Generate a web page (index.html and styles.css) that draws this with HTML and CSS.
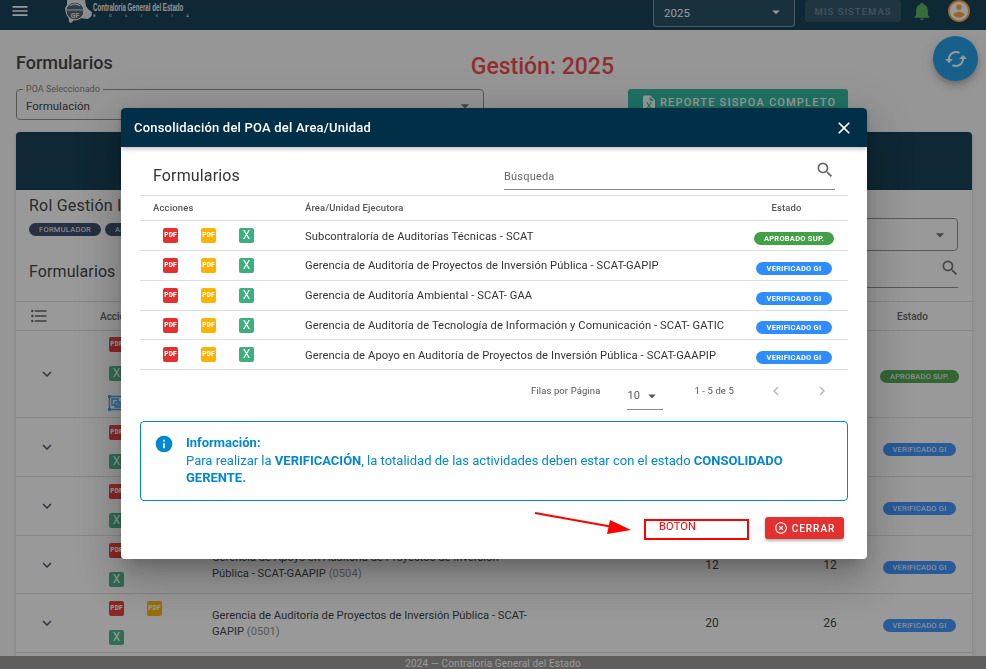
FILE: index.html
```html
<!DOCTYPE html>
<html lang="es">
<head>
<meta charset="utf-8">
<title>Formularios</title>
<link rel="stylesheet" href="styles.css">
</head>
<body>
<svg class="sprite" aria-hidden="true">
  <symbol id="i-menu" viewBox="0 0 24 24"><path d="M3,6H21V8H3V6M3,11H21V13H3V11M3,16H21V18H3V16Z"/></symbol>
  <symbol id="i-drop" viewBox="0 0 24 24"><path d="M7,10L12,15L17,10H7Z"/></symbol>
  <symbol id="i-bell" viewBox="0 0 24 24"><path d="M21,19V20H3V19L5,17V11C5,7.9 7.03,5.17 10,4.29C10,4.19 10,4.1 10,4A2,2 0 0,1 12,2A2,2 0 0,1 14,4C14,4.1 14,4.19 14,4.29C16.97,5.17 19,7.9 19,11V17L21,19M14,21A2,2 0 0,1 12,23A2,2 0 0,1 10,21"/></symbol>
  <symbol id="i-search" viewBox="0 0 24 24"><path d="M9.5,3A6.5,6.5 0 0,1 16,9.5C16,11.11 15.41,12.59 14.44,13.73L14.71,14H15.5L20.5,19L19,20.5L14,15.5V14.71L13.73,14.44C12.59,15.41 11.11,16 9.5,16A6.5,6.5 0 0,1 3,9.5A6.5,6.5 0 0,1 9.5,3M9.5,5C7,5 5,7 5,9.5C5,12 7,14 9.5,14C12,14 14,12 14,9.5C14,7 12,5 9.5,5Z"/></symbol>
  <symbol id="i-close" viewBox="0 0 24 24"><path d="M19,6.41L17.59,5L12,10.59L6.41,5L5,6.41L10.59,12L5,17.59L6.41,19L12,13.41L17.59,19L19,17.59L13.41,12L19,6.41Z"/></symbol>
  <symbol id="i-info" viewBox="0 0 24 24"><path d="M13,9H11V7H13M13,17H11V11H13M12,2A10,10 0 0,0 2,12A10,10 0 0,0 12,22A10,10 0 0,0 22,12A10,10 0 0,0 12,2Z"/></symbol>
  <symbol id="i-close-circle" viewBox="0 0 24 24"><path d="M12,20C7.59,20 4,16.41 4,12C4,7.59 7.59,4 12,4C16.41,4 20,7.59 20,12C20,16.41 16.41,20 12,20M12,2C6.47,2 2,6.47 2,12C2,17.53 6.47,22 12,22C17.53,22 22,17.53 22,12C22,6.47 17.53,2 12,2M14.59,8L12,10.59L9.41,8L8,9.41L10.59,12L8,14.59L9.41,16L12,13.41L14.59,16L16,14.59L13.41,12L16,9.41L14.59,8Z"/></symbol>
  <symbol id="i-chev-down" viewBox="0 0 24 24"><path d="M7.41,8.58L12,13.17L16.59,8.58L18,10L12,16L6,10L7.41,8.58Z"/></symbol>
  <symbol id="i-chev-left" viewBox="0 0 24 24"><path d="M15.41,16.58L10.83,12L15.41,7.41L14,6L8,12L14,18L15.41,16.58Z"/></symbol>
  <symbol id="i-chev-right" viewBox="0 0 24 24"><path d="M8.59,16.58L13.17,12L8.59,7.41L10,6L16,12L10,18L8.59,16.58Z"/></symbol>
  <symbol id="i-list" viewBox="0 0 24 24"><path d="M7,5H21V7H7V5M7,13V11H21V13H7M4,4.5A1.5,1.5 0 0,1 5.5,6A1.5,1.5 0 0,1 4,7.5A1.5,1.5 0 0,1 2.5,6A1.5,1.5 0 0,1 4,4.5M4,10.5A1.5,1.5 0 0,1 5.5,12A1.5,1.5 0 0,1 4,13.5A1.5,1.5 0 0,1 2.5,12A1.5,1.5 0 0,1 4,10.5M7,19V17H21V19H7M4,16.5A1.5,1.5 0 0,1 5.5,18A1.5,1.5 0 0,1 4,19.5A1.5,1.5 0 0,1 2.5,18A1.5,1.5 0 0,1 4,16.5Z"/></symbol>
  <symbol id="i-file-excel" viewBox="0 0 24 24"><path d="M14,2H6A2,2 0 0,0 4,4V20A2,2 0 0,0 6,22H18A2,2 0 0,0 20,20V8L14,2M15.8,20H14L12,16.6L10,20H8.2L11.1,15.5L8.2,11H10L12,14.4L14,11H15.8L12.9,15.5L15.8,20M13,9V3.5L18.5,9H13Z"/></symbol>
  <symbol id="i-account" viewBox="0 0 24 24"><path d="M12,19.2C9.5,19.2 7.29,17.92 6,16C6.03,14 10,12.9 12,12.9C14,12.9 17.97,14 18,16C16.71,17.92 14.5,19.2 12,19.2M12,5A3,3 0 0,1 15,8A3,3 0 0,1 12,11A3,3 0 0,1 9,8A3,3 0 0,1 12,5M12,2A10,10 0 0,0 2,12A10,10 0 0,0 12,22A10,10 0 0,0 22,12A10,10 0 0,0 12,2Z"/></symbol>
  <symbol id="i-sync" viewBox="0 0 24 24"><path d="M19,8L15,12H18A6,6 0 0,1 12,18C11,18 10.03,17.75 9.2,17.3L7.74,18.76C8.97,19.54 10.43,20 12,20A8,8 0 0,0 20,12H23M6,12A6,6 0 0,1 12,6C13,6 13.97,6.25 14.8,6.7L16.26,5.24C15.03,4.46 13.57,4 12,4A8,8 0 0,0 4,12H1L5,16L9,12"/></symbol>
</svg>

<div class="app">
  <header class="appbar">
    <svg class="ic appbar-menu"><use href="#i-menu"/></svg>
    <div class="brand">
      <svg class="brand-logo" viewBox="0 0 28 24">
        <path class="logo-map" d="M3 0H21L22 6L24 9L28 12L27.500 16L24 19L15 18L11 19L7 23L5 22L4.500 17L2 12L1 8L3 5Z"/>
        <circle class="logo-disc" cx="11" cy="11" r="9"/>
        <path class="logo-line" d="M3 10H19M6 5.500C9 3.500 14 3.500 16 6"/>
        <text class="logo-text" x="11" y="18">GF</text>
      </svg>
      <div class="brand-text">
        <span class="brand-name">Contraloría General del Estado</span>
        <span class="brand-sub">BOLIVIA</span>
      </div>
    </div>
    <div class="year-select">
      <span>2025</span>
      <svg class="ic year-drop"><use href="#i-drop"/></svg>
    </div>
    <span class="systems-btn">MIS SISTEMAS</span>
    <svg class="ic bell"><use href="#i-bell"/></svg>
    <span class="avatar"><svg class="ic"><use href="#i-account"/></svg></span>
  </header>

  <main class="main">
    <div class="title-row">
      <h1 class="page-title">Formularios</h1>
      <div class="gestion">Gestión: 2025</div>
    </div>
    <div class="filter-row">
      <div class="poa-select">
        <span class="poa-label">POA Seleccionado</span>
        <span class="poa-value">Formulación</span>
        <svg class="ic poa-drop"><use href="#i-drop"/></svg>
      </div>
      <div class="report-btn">
        <svg class="ic"><use href="#i-file-excel"/></svg>
        <span>REPORTE SISPOA COMPLETO</span>
      </div>
    </div>

    <section class="card">
      <div class="card-head"></div>
      <div class="card-top">
        <div class="role">
          <div class="role-title">Rol Gestión Institucional</div>
          <div class="role-chips">
            <span class="role-chip">FORMULADOR</span>
            <span class="role-chip">APROBADOR</span>
          </div>
        </div>
        <div class="unit-select"><svg class="ic"><use href="#i-drop"/></svg></div>
      </div>
      <div class="search-row">
        <div class="search-title">Formularios</div>
        <div class="bg-search"><svg class="ic"><use href="#i-search"/></svg></div>
      </div>
      <div class="bt-row bt-head">
        <span class="bt-toggle"><svg class="ic bt-list"><use href="#i-list"/></svg></span>
        <span>Acciones</span>
        <span>Área/Unidad Ejecutora</span>
        <span></span><span></span>
        <span class="bt-state">Estado</span>
      </div>

      <div class="bt-row bt-tall">
        <span class="bt-toggle"><svg class="ic bt-chev"><use href="#i-chev-down"/></svg></span>
        <div class="bt-icons">
          <span class="doc doc-pdf">PDF</span><span class="doc doc-yellow">PDF</span>
          <span class="doc doc-x">X</span><span></span>
          <svg class="doc-combine" viewBox="0 0 16 16"><path d="M1.500 1.500H14.500V14.500H1.500ZM4 4H10V10H4ZM7 7H12V12H7Z"/><path class="doc-combine-dots" d="M0 0H3V3H0ZM13 0H16V3H13ZM0 13H3V16H0ZM13 13H16V16H13Z"/></svg>
        </div>
        <div class="bt-name">Subcontraloría de Auditorías Técnicas - SCAT <span class="code">(0500)</span></div>
        <span class="bt-num">14</span><span class="bt-num bt-num-2">14</span>
        <span class="bt-state"><span class="pill pill-green">APROBADO SUP.</span></span>
      </div>
      <div class="bt-row">
        <span class="bt-toggle"><svg class="ic bt-chev"><use href="#i-chev-down"/></svg></span>
        <div class="bt-icons">
          <span class="doc doc-pdf">PDF</span><span class="doc doc-yellow">PDF</span>
          <span class="doc doc-x">X</span>
        </div>
        <div class="bt-name">Gerencia de Auditoría Ambiental - SCAT- GAA <span class="code">(0502)</span></div>
        <span class="bt-num">16</span><span class="bt-num bt-num-2">16</span>
        <span class="bt-state"><span class="pill pill-blue">VERIFICADO GI</span></span>
      </div>
      <div class="bt-row">
        <span class="bt-toggle"><svg class="ic bt-chev"><use href="#i-chev-down"/></svg></span>
        <div class="bt-icons">
          <span class="doc doc-pdf">PDF</span><span class="doc doc-yellow">PDF</span>
          <span class="doc doc-x">X</span>
        </div>
        <div class="bt-name">Gerencia de Auditoría de Tecnología de Información y Comunicación - SCAT- GATIC <span class="code">(0503)</span></div>
        <span class="bt-num">18</span><span class="bt-num bt-num-2">18</span>
        <span class="bt-state"><span class="pill pill-blue">VERIFICADO GI</span></span>
      </div>
      <div class="bt-row bt-short">
        <span class="bt-toggle"><svg class="ic bt-chev"><use href="#i-chev-down"/></svg></span>
        <div class="bt-icons">
          <span class="doc doc-pdf">PDF</span><span class="doc doc-yellow">PDF</span>
          <span class="doc doc-x">X</span>
        </div>
        <div class="bt-name">Gerencia de Apoyo en Auditoría de Proyectos de Inversión Pública - SCAT-GAAPIP <span class="code">(0504)</span></div>
        <span class="bt-num">12</span><span class="bt-num bt-num-2">12</span>
        <span class="bt-state"><span class="pill pill-blue">VERIFICADO GI</span></span>
      </div>
      <div class="bt-row">
        <span class="bt-toggle"><svg class="ic bt-chev"><use href="#i-chev-down"/></svg></span>
        <div class="bt-icons">
          <span class="doc doc-pdf">PDF</span><span class="doc doc-yellow">PDF</span>
          <span class="doc doc-x">X</span>
        </div>
        <div class="bt-name">Gerencia de Auditoría de Proyectos de Inversión Pública - SCAT-GAPIP <span class="code">(0501)</span></div>
        <span class="bt-num">20</span><span class="bt-num bt-num-2">26</span>
        <span class="bt-state"><span class="pill pill-blue">VERIFICADO GI</span></span>
      </div>
      <div class="bt-row"></div>
    </section>
  </main>

  <footer class="footer">2024 — Contraloría General del Estado</footer>
</div>

<button class="fab" type="button" aria-label="Actualizar"><svg class="ic"><use href="#i-sync"/></svg></button>
<div class="overlay"></div>

<div class="dialog" role="dialog">
  <div class="dlg-head">
    <span>Consolidación del POA del Area/Unidad</span>
    <svg class="ic dlg-close"><use href="#i-close"/></svg>
  </div>
  <div class="dlg-body">
    <div class="dlg-search-row">
      <div class="dlg-title">Formularios</div>
      <div class="dlg-search">
        <span>Búsqueda</span>
        <svg class="ic"><use href="#i-search"/></svg>
      </div>
    </div>

    <div class="mt">
      <div class="mt-row mt-head">
        <span class="mt-actions-head">Acciones</span>
        <span>Área/Unidad Ejecutora</span>
        <span class="mt-state-head">Estado</span>
      </div>
      <div class="mt-row mt-row-1">
        <div class="mt-icons"><span class="doc doc-pdf">PDF</span><span class="doc doc-yellow">PDF</span><span class="doc doc-x">X</span></div>
        <span class="mt-name">Subcontraloría de Auditorías Técnicas - SCAT</span>
        <span class="mt-state"><span class="pill pill-green">APROBADO SUP.</span></span>
      </div>
      <div class="mt-row">
        <div class="mt-icons"><span class="doc doc-pdf">PDF</span><span class="doc doc-yellow">PDF</span><span class="doc doc-x">X</span></div>
        <span class="mt-name">Gerencia de Auditoría de Proyectos de Inversión Pública - SCAT-GAPIP</span>
        <span class="mt-state"><span class="pill pill-blue">VERIFICADO GI</span></span>
      </div>
      <div class="mt-row">
        <div class="mt-icons"><span class="doc doc-pdf">PDF</span><span class="doc doc-yellow">PDF</span><span class="doc doc-x">X</span></div>
        <span class="mt-name">Gerencia de Auditoría Ambiental - SCAT- GAA</span>
        <span class="mt-state"><span class="pill pill-blue">VERIFICADO GI</span></span>
      </div>
      <div class="mt-row mt-row-short">
        <div class="mt-icons"><span class="doc doc-pdf">PDF</span><span class="doc doc-yellow">PDF</span><span class="doc doc-x">X</span></div>
        <span class="mt-name">Gerencia de Auditoría de Tecnología de Información y Comunicación - SCAT- GATIC</span>
        <span class="mt-state"><span class="pill pill-blue">VERIFICADO GI</span></span>
      </div>
      <div class="mt-row mt-row-last">
        <div class="mt-icons"><span class="doc doc-pdf">PDF</span><span class="doc doc-yellow">PDF</span><span class="doc doc-x">X</span></div>
        <span class="mt-name">Gerencia de Apoyo en Auditoría de Proyectos de Inversión Pública - SCAT-GAAPIP</span>
        <span class="mt-state"><span class="pill pill-blue">VERIFICADO GI</span></span>
      </div>
    </div>

    <div class="pager">
      <span class="pager-label">Filas por Página</span>
      <div class="pager-select"><span>10</span><svg class="ic"><use href="#i-drop"/></svg></div>
      <span class="pager-range">1 - 5 de 5</span>
      <svg class="ic pager-nav"><use href="#i-chev-left"/></svg>
      <svg class="ic pager-nav"><use href="#i-chev-right"/></svg>
    </div>

    <div class="notice">
      <svg class="ic notice-icon"><use href="#i-info"/></svg>
      <div class="notice-text">
        <strong>Información:</strong><br>
        Para realizar la <strong>VERIFICACIÓN</strong>, la totalidad de las actividades deben estar con el estado <strong>CONSOLIDADO GERENTE.</strong>
      </div>
    </div>

    <div class="dlg-actions">
      <span class="close-btn"><svg class="ic"><use href="#i-close-circle"/></svg>CERRAR</span>
    </div>
  </div>

  <svg class="mark-arrow" viewBox="0 0 100 24"><path class="mark-line" d="M0 1L78 15"/><path class="mark-head" d="M96 18L75 8L72 22Z"/></svg>
  <div class="mark-box">BOTON</div>
</div>
</body>
</html>
```
FILE: styles.css
```css
* { box-sizing: border-box; }
html, body { margin: 0; height: 100%; overflow: hidden; }
body { font-family: Roboto, "Liberation Sans", sans-serif; color: #333; background: #fafafa; }
.sprite { display: none; }
.ic { display: block; width: 24px; height: 24px; fill: currentColor; flex: none; }

.app { height: 669px; display: flex; flex-direction: column; background: #fafafa; }

/* App bar */
.appbar { height: 30px; flex: none; display: flex; align-items: flex-start; background: #012f47; color: #fff; }
.appbar-menu { width: 20px; height: 20px; margin: 1px 0 0 9.5px; }
.brand { display: flex; flex: none; margin-left: 34.5px; }
.brand-logo { width: 28px; height: 24px; flex: none; }
.logo-map { fill: #e6e8e8; }
.logo-disc { fill: #3f5a68; stroke: #fff; stroke-width: 1; }
.logo-line { fill: none; stroke: #e6e8e8; stroke-width: 1.2; }
.logo-text { fill: #e6e8e8; font-size: 7px; font-weight: 700; text-anchor: middle; }
.brand-text { width: 92px; margin-left: 1px; display: flex; flex-direction: column; color: #f2f2f2; }
.brand-name { margin-top: 1px; font: 700 11px/12px "Liberation Sans", sans-serif; white-space: nowrap; transform: scaleX(.56); transform-origin: left; }
.brand-sub { font-size: 4px; line-height: 5px; letter-spacing: 13.5px; white-space: nowrap; }
.year-select { flex: none; width: 142px; height: 32px; margin: -5px 0 0 468px; padding: 0 10px; display: flex; align-items: center; justify-content: space-between; background: rgba(255,255,255,.08); border: 1px solid rgba(255,255,255,.4); border-radius: 4px; font-size: 11.5px; color: #fff; }
.year-select span { margin-top: 4px; }
.year-drop { width: 18px; height: 18px; margin: 2px -1px 0 0; }
.systems-btn { flex: none; width: 96px; height: 22px; margin-left: 10px; display: flex; align-items: center; justify-content: center; background: rgba(255,255,255,.12); border-radius: 3px; color: rgba(255,255,255,.3); font-size: 9.5px; font-weight: 500; letter-spacing: 1px; white-space: nowrap; }
.bell { width: 20px; height: 20px; margin: 1px 0 0 10.5px; color: #4caf50; }
.avatar { flex: none; width: 22px; height: 22px; margin-left: 16.5px; border-radius: 50%; background: #ff9f38; display: flex; align-items: center; justify-content: center; color: #fff; }
.avatar .ic { width: 22px; height: 22px; color: #fff; }

/* Main */
.main { flex: 1; min-height: 0; overflow: hidden; padding: 19px 14px 0 16px; }
.title-row { display: flex; height: 40px; }
.page-title { margin: 0; font-size: 18px; line-height: 28px; font-weight: 500; color: #333; }
.gestion { margin: 2px 0 0 358px; font-size: 23px; line-height: 32px; font-weight: 500; color: #f03a3a; }
.filter-row { display: flex; margin-bottom: 9px; }
.poa-select { position: relative; width: 468px; height: 31px; border: 1px solid #888; border-radius: 4px; display: flex; align-items: center; padding: 3px 9px 0; font-size: 11.5px; }
.poa-label { position: absolute; left: 6px; top: -5px; padding: 0 3px; font-size: 9px; line-height: 9px; color: #777; background: #fafafa; }
.poa-drop { position: absolute; right: 8px; top: 6px; width: 20px; height: 20px; color: #666; }
.report-btn { flex: none; width: 220px; height: 34px; margin-left: 144px; display: flex; align-items: flex-start; padding: 5px 0 0 12px; background: #1fb89b; border-radius: 3px; color: #fff; font-size: 11px; font-weight: 500; letter-spacing: 1.2px; white-space: nowrap; }
.report-btn .ic { width: 18px; height: 18px; margin-right: 2px; }
.report-btn span { line-height: 18px; }

/* Background card */
.card { width: 956px; height: 540px; background: #fff; border-radius: 4px 4px 0 0; box-shadow: 0 2px 4px rgba(0,0,0,.2); }
.card-head { height: 58px; background: #012f47; border-radius: 4px 4px 0 0; }
.card-top { display: flex; justify-content: space-between; padding: 6px 14px 0 13px; height: 62px; }
.role-title { font-size: 16px; line-height: 20px; letter-spacing: .2px; color: #333; }
.role-chips { display: flex; gap: 4px; margin-top: 7px; }
.role-chip { height: 13px; padding: 0 10px; border-radius: 7px; background: #2d4060; color: #fff; font-size: 7.5px; line-height: 13px; letter-spacing: .3px; }
.unit-select { width: 300px; height: 33px; margin-top: 22px; border: 1px solid #888; border-radius: 4px; display: flex; justify-content: flex-end; align-items: center; padding-right: 7px; color: #666; }
.unit-select .ic { width: 20px; height: 20px; }
.search-row { display: flex; justify-content: space-between; padding: 0 14px 0 13px; height: 49px; }
.search-title { font-size: 16px; line-height: 20px; margin-top: 10px; letter-spacing: .1px; color: #333; }
.bg-search { width: 300px; height: 36px; border-bottom: 1px solid #888; display: flex; justify-content: flex-end; color: #666; }
.bg-search .ic { width: 20px; height: 20px; margin: 6px -2px 0 0; }

.bt-row { display: grid; grid-template-columns: 84px 112px 441px 118px 99px 1fr; align-items: center; height: 59px; border-top: 1px solid #ddd; font-size: 11.2px; color: #333; }
.bt-tall { height: 87px; }
.bt-short { height: 58px; }
.bt-head { height: 29px; font-size: 10px; font-weight: 500; color: #555; }
.bt-toggle { display: flex; justify-content: center; padding-right: 22px; color: #2d4a63; }
.bt-head .bt-toggle { padding-right: 38px; }
.bt-list { width: 20px; height: 20px; color: #555; }
.bt-chev { width: 18px; height: 18px; }
.bt-state { text-align: center; padding-right: 3px; }
.bt-head .bt-state { padding-right: 17px; }
.bt-state .pill { margin-top: 5px; font-weight: 400; }
.bt-state .pill-blue { width: 73px; }
.bt-state .pill-green { width: 79px; }
.bt-num { text-align: center; font-size: 12px; }
.bt-num-2 { padding-left: 19px; }
.bt-icons { display: grid; grid-template-columns: 16px 16px; column-gap: 22px; row-gap: 14px; margin-left: 9px; }
.bt-name { width: 320px; margin-top: 2px; line-height: 16px; }
.code { color: #888; }

/* Shared */
.doc { display: block; width: 15px; height: 15px; border-radius: 2px; color: #fff; text-align: center; font-size: 6.5px; line-height: 15px; font-weight: 900; letter-spacing: .1px; }
.doc-pdf { background: #e53030; }
.doc-yellow { background: #ffb300; }
.doc-x { background: #3daf7e; font-size: 12px; font-weight: 400; letter-spacing: 0; }
.doc-combine { width: 16px; height: 16px; margin-left: -1px; fill: none; stroke: #2a9df4; stroke-width: 1.4; }
.doc-combine-dots { fill: #2a9df4; stroke: none; }
.pill { display: inline-block; height: 13px; border-radius: 7px; color: #fff; font-size: 7.5px; line-height: 13px; font-weight: 700; letter-spacing: .25px; text-align: center; vertical-align: top; }
.pill-green { width: 80px; background: #43a047; }
.pill-blue { width: 76px; background: #2f8dff; }

/* FAB and overlay */
.fab { position: fixed; left: 933px; top: 36px; width: 45px; height: 45px; padding: 0; border: 0; border-radius: 50%; background: #0f96e8; color: #fff; display: flex; align-items: center; justify-content: center; box-shadow: 0 3px 5px -1px rgba(0,0,0,.2), 0 6px 10px 0 rgba(0,0,0,.14), 0 1px 18px 0 rgba(0,0,0,.12); }
.overlay { position: fixed; inset: 0; background: rgba(33,33,33,.46); }

/* Dialog */
.dialog { position: fixed; left: 121px; top: 108px; width: 746px; height: 451px; background: #fff; border-radius: 4px; box-shadow: 0 11px 15px -7px rgba(0,0,0,.2), 0 24px 38px 3px rgba(0,0,0,.14), 0 9px 46px 8px rgba(0,0,0,.12); }
.dlg-head { position: relative; height: 39px; padding: 0 13px; display: flex; align-items: center; justify-content: space-between; background: #012f47; color: #fff; border-radius: 4px 4px 0 0; font-size: 13px; font-weight: 500; letter-spacing: .2px; box-shadow: 0 2px 4px rgba(0,0,0,.25); }
.dlg-close { width: 20px; height: 20px; }
.dlg-body { padding: 0 19px; }
.dlg-search-row { height: 48px; display: flex; }
.dlg-title { width: 364px; padding: 19px 0 0 13px; font-size: 16px; line-height: 20px; letter-spacing: .15px; color: #333; }
.dlg-search { width: 331px; height: 43px; border-bottom: 1px solid #888; display: flex; justify-content: space-between; font-size: 11px; color: #666; }
.dlg-search span { margin-top: 23px; line-height: 14px; letter-spacing: .2px; }
.dlg-search .ic { width: 20px; height: 20px; margin: 13px 0 0 0; color: #666; }

.mt { border-bottom: 1px solid #ddd; }
.mt-row { display: grid; grid-template-columns: 165px minmax(0, 1fr) 128px; align-items: center; height: 30px; border-top: 1px solid #ddd; font-size: 11.2px; color: #333; letter-spacing: .1px; }
.mt-row-short { height: 29px; }
.mt-name { margin-top: -1px; white-space: nowrap; }
.mt-row-1 .mt-name { margin-top: 1px; }
.mt-row-short .mt-name { margin-top: 0; }
.mt-row-last .mt-name { margin-top: 1px; }
.mt-head { height: 25px; padding-bottom: 2px; font-size: 9.5px; font-weight: 500; color: #555; letter-spacing: .15px; }
.mt-actions-head { padding-left: 13px; }
.mt-state-head { text-align: center; padding-left: 5px; }
.mt-state { text-align: center; padding-left: 20px; white-space: nowrap; }
.mt-row .pill { margin-top: 5px; }
.mt-icons { display: flex; gap: 23px; padding-left: 23px; }

.pager { height: 51px; display: flex; align-items: flex-start; font-size: 9.5px; color: #555; letter-spacing: .1px; }
.pager-label { margin: 15px 0 0 391px; }
.pager-select { width: 36px; height: 25px; margin: 15px 0 0 27px; padding-top: 4px; border-bottom: 1px solid #888; display: flex; justify-content: space-between; font-size: 11px; }
.pager-select .ic { width: 18px; height: 18px; margin: -2px 2px 0 0; }
.pager-range { margin: 15px 0 0 31px; width: 73px; }
.pager-nav { width: 18px; height: 18px; margin: 12px 0 0 0; color: #bbb; }
.pager-nav + .pager-nav { margin-left: 28px; }

.notice { height: 80px; border: 1px solid #0288d1; border-radius: 4px; display: flex; padding: 12px 15px 0 13px; color: #0288d1; font-size: 13px; line-height: 17.5px; }
.notice-icon { width: 20px; height: 20px; margin-right: 12px; }
.notice-text strong { font-weight: 700; }

.dlg-actions { display: flex; justify-content: flex-end; padding: 16px 4px 0 0; }
.close-btn { width: 79px; height: 22px; background: #e53030; border-radius: 3px; color: #fff; display: flex; align-items: center; justify-content: center; gap: 4px; font-size: 10px; font-weight: 500; letter-spacing: 1px; box-shadow: 0 2px 3px rgba(0,0,0,.3); }
.close-btn .ic { width: 14px; height: 14px; }

/* Annotations drawn over the screenshot */
.mark-arrow { position: absolute; left: 414px; top: 404px; width: 100px; height: 24px; overflow: visible; }
.mark-line { stroke: #f00; stroke-width: 2; fill: none; }
.mark-head { fill: #f00; }
.mark-box { position: absolute; left: 523px; top: 411px; width: 105px; height: 21px; border: 2px solid #f00; padding-left: 13px; color: #f00; font-size: 11px; line-height: 11px; letter-spacing: .2px; }

/* Footer */
.footer { height: 13px; flex: none; background: #94928f; color: #fff; text-align: center; font-size: 10px; line-height: 16px; letter-spacing: .15px; overflow: hidden; }
```
